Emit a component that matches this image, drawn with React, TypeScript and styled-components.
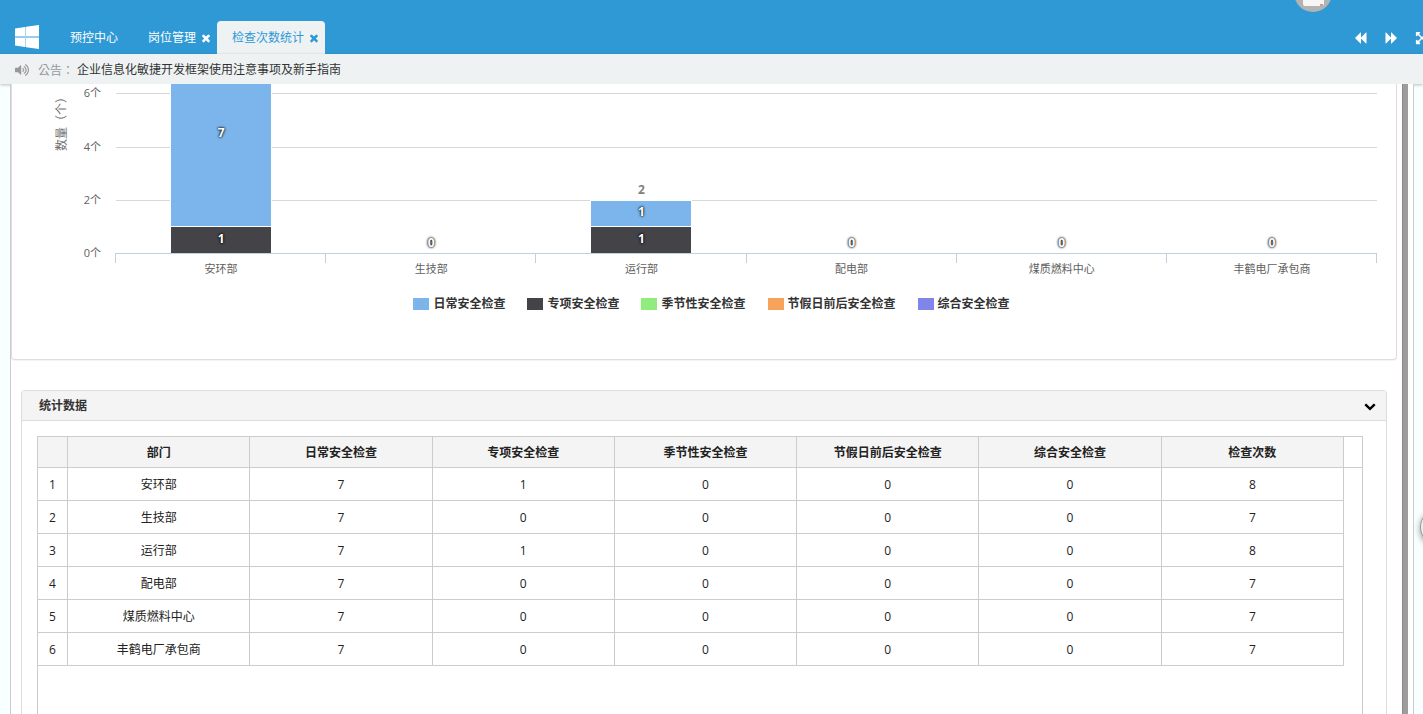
import React from "react";
import styled, { createGlobalStyle, css } from "styled-components";
import { FaExpandArrowsAlt, FaVolumeUp } from "react-icons/fa";

const fontStack = `"Open Sans", "Noto Sans CJK SC", sans-serif`;

const GlobalStyle = createGlobalStyle`
  * { box-sizing: border-box; }
  html, body, #root { height: 100%; }
  body {
    margin: 0;
    overflow: hidden;
    background: #f7ffff;
    color: #222;
    font: 12px/18px ${fontStack};
  }
  button { font: inherit; color: inherit; background: none; border: 0; padding: 0; cursor: pointer; }
`;

const Page = styled.div`
  position: relative;
  display: flex;
  flex-direction: column;
  height: 100%;
  overflow: hidden;
`;

const Header = styled.header`
  position: relative;
  flex: none;
  display: flex;
  align-items: flex-end;
  justify-content: space-between;
  height: 54px;
  background: #2f99d6;
  color: #fff;
`;

const Avatar = styled.svg`
  position: absolute;
  top: -26px;
  right: 91px;
`;

const Nav = styled.nav`
  display: flex;
  align-items: flex-end;
  padding-left: 15px;
`;

const Logo = styled.svg`
  display: block;
  margin: 0 16px 5px 0;
`;

const Tab = styled.div<{ $active?: boolean; $closable?: boolean }>`
  display: flex;
  align-items: center;
  gap: 4px;
  height: 33px;
  padding: 0 ${(p) => (p.$closable ? 5 : 15)}px 0 15px;
  ${(p) =>
    p.$active &&
    css`
      background: #eef2f3;
      color: #2f99d6;
      border-radius: 4px 4px 0 0;
    `}
`;

const TabLink = styled.a`
  color: inherit;
  text-decoration: none;
`;

const IconButton = styled.button`
  display: block;
  line-height: 0;
`;

const Tools = styled.div`
  flex: none;
  display: flex;
  align-items: center;
  gap: 18px;
  height: 33px;
  margin-right: -6px;
`;

const Notice = styled.div`
  position: relative;
  flex: none;
  display: flex;
  align-items: center;
  height: 30px;
  padding: 2px 0 0 15px;
  background: #eef2f3;
  color: #999;
  box-shadow: 0 1px 3px rgba(0, 0, 0, 0.25);
`;

const NoticeLabel = styled.span`
  margin-left: 9px;
  width: 39px;
  white-space: nowrap;
  font-family: "Noto Sans CJK TC", sans-serif;
`;

const NoticeLink = styled.a`
  color: #333;
  text-decoration: none;
`;

const Frame = styled.main`
  position: relative;
  flex: 1;
  min-height: 0;
  display: flex;
  margin: 0 9px 0 10px;
  border: solid #ccc;
  border-width: 0 1px;
  background: #fff;
  overflow: hidden;
`;

const Content = styled.div`
  flex: 1;
  min-width: 0;
  display: flex;
  flex-direction: column;
`;

const ScrollThumb = styled.div`
  flex: none;
  width: 6px;
  margin: 0 5px;
  background: #9e9d9c;
  border-left: 1px solid #8c8b8b;
`;

const ChartPanel = styled.section`
  flex: none;
  height: 276px;
  border: 1px solid #ddd;
  border-top: 0;
  border-radius: 0 0 4px 4px;
  box-shadow: 0 1px 1px rgba(0, 0, 0, 0.05);
`;

const ChartRow = styled.div`
  display: flex;
  padding-right: 19px;
`;

const AxisSvg = styled.svg`
  flex: none;
  display: block;
  font: 11px ${fontStack};
  fill: #606060;
`;

const AxisTitle = styled.text`
  font: 12px "Noto Sans CJK TC", sans-serif;
  text-spacing-trim: space-all;
  fill: #707070;
`;

const PlotSvg = styled.svg`
  flex: 1;
  min-width: 0;
  display: block;
  overflow: visible;
  font: 11px ${fontStack};
  fill: #606060;
`;

const BarValue = styled.text`
  font-size: 12px;
  font-weight: 700;
  fill: #fff;
  text-shadow: 0 0 3px #000, 0 0 2px #000;
`;

const StackTotal = styled.text`
  font-size: 12px;
  font-weight: 700;
  fill: #808080;
`;

const Legend = styled.ul`
  display: flex;
  justify-content: center;
  gap: 22px;
  margin: 0;
  padding: 7px 0 0 15px;
  list-style: none;
  font-weight: 600;
  color: #333;
`;

const LegendItem = styled.li`
  display: flex;
  align-items: center;
  gap: 4px;
`;

const Swatch = styled.span<{ $color: string }>`
  width: 16px;
  height: 12px;
  background: ${(p) => p.$color};
`;

const DataPanel = styled.section`
  flex: 1;
  display: flex;
  flex-direction: column;
  margin: 30px 10px 0;
  border: 1px solid #ddd;
  border-bottom: 0;
  border-radius: 4px 4px 0 0;
`;

const PanelHeader = styled.div`
  display: flex;
  align-items: center;
  justify-content: space-between;
  height: 30px;
  padding: 0 10px 0 17px;
  background: #f4f4f4;
  border-bottom: 1px solid #ddd;
`;

const PanelTitle = styled.h2`
  margin: 0;
  font-size: 12px;
  line-height: 18px;
  font-weight: 600;
  color: #333;
`;

const Grid = styled.div`
  flex: 1;
  display: flex;
  align-items: flex-start;
  margin: 15px 23px 0 15px;
  border: 1px solid #ccc;
  border-bottom: 0;
`;

const GridGutter = styled.div`
  flex: none;
  width: 18px;
  height: 31px;
  border-bottom: 1px solid #ccc;
`;

const TableArea = styled.div`
  flex: 1;
  min-width: 0;
`;

const Table = styled.table`
  width: 100%;
  table-layout: fixed;
  border-collapse: separate;
  border-spacing: 0;
`;

const NumberCol = styled.col`
  width: 30px;
`;

const HeadCell = styled.th`
  height: 31px;
  padding: 2px 0 0;
  border: solid #ccc;
  border-width: 0 1px 1px 0;
  background: #f4f4f4;
  font-weight: 600;
  color: #222;
`;

const Cell = styled.td`
  height: 33px;
  padding: 2px 0 0;
  border: solid #ccc;
  border-width: 0 1px 1px 0;
  text-align: center;
`;

const FloatingKnob = styled.button`
  position: absolute;
  right: -33px;
  top: 509px;
  width: 36px;
  height: 36px;
  border: 1px solid #999;
  border-radius: 50%;
  background: #eee;
  box-shadow: 0 2px 6px rgba(0, 0, 0, 0.4);
`;

const CloseIcon = () => (
  <svg width="12" height="12" viewBox="0 0 1792 1792" fill="currentColor" aria-hidden="true">
    <path d="M1490 1322q0 40-28 68l-136 136q-28 28-68 28t-68-28l-294-294-294 294q-28 28-68 28t-68-28l-136-136q-28-28-28-68t28-68l294-294-294-294q-28-28-28-68t28-68l136-136q28-28 68-28t68 28l294 294 294-294q28-28 68-28t68 28l136 136q28 28 28 68t-28 68l-294 294 294 294q28 28 28 68z" />
  </svg>
);

const ChevronIcon = () => (
  <svg width="12" height="12" viewBox="0 0 1792 1792" fill="#000" aria-hidden="true">
    <path d="M1683 808l-742 741q-19 19-45 19t-45-19l-742-741q-19-19-19-45.500t19-45.500l166-165q19-19 45-19t45 19l531 531 531-531q19-19 45-19t45 19l166 165q19 19 19 45.500t-19 45.500z" />
  </svg>
);

const BackwardIcon = () => (
  <svg width="12" height="12" viewBox="0 0 12 12" fill="#fff" aria-hidden="true">
    <path d="M0 6L5.500 .5H6V5.500L11 .5h.5v11H11L6 6.500v5h-.5z" />
  </svg>
);

const ForwardIcon = () => (
  <svg width="12" height="12" viewBox="0 0 12 12" fill="#fff" aria-hidden="true">
    <path d="M12 6L6.500 .5H6V5.500L1 .5H.5v11H1L6 6.500v5h.5z" />
  </svg>
);

const WindowsLogo = () => (
  <Logo width="24" height="24" viewBox="0 0 24 24" aria-hidden="true">
    <path fill="#fff" d="M0 3.500L10 2v9.200H0zM11 1.800L24 0v11.200H11zM0 12.800h10V22L0 20.500zM11 12.800h13V24l-13-1.800z" />
    <path fill="#a9d5ef" d="M0 11.200h24v1.600H0zM10 2h1v20h-1z" />
  </Logo>
);

type Tone = "blue" | "dark";
interface Department {
  name: string;
  counts: number[];
  total: number;
  stack: { tone: Tone; value: number; height: number }[];
}

const departments: Department[] = [
  { name: "安环部", counts: [7, 1, 0, 0, 0], total: 8, stack: [{ tone: "dark", value: 1, height: 27 }, { tone: "blue", value: 7, height: 187 }] },
  { name: "生技部", counts: [7, 0, 0, 0, 0], total: 7, stack: [] },
  { name: "运行部", counts: [7, 1, 0, 0, 0], total: 8, stack: [{ tone: "dark", value: 1, height: 27 }, { tone: "blue", value: 1, height: 26 }] },
  { name: "配电部", counts: [7, 0, 0, 0, 0], total: 7, stack: [] },
  { name: "煤质燃料中心", counts: [7, 0, 0, 0, 0], total: 7, stack: [] },
  { name: "丰鹤电厂承包商", counts: [7, 0, 0, 0, 0], total: 7, stack: [] },
];

const series = [
  { name: "日常安全检查", color: "#7cb5ec" },
  { name: "专项安全检查", color: "#434348" },
  { name: "季节性安全检查", color: "#90ed7d" },
  { name: "节假日前后安全检查", color: "#f7a35c" },
  { name: "综合安全检查", color: "#8085e9" },
];

const tones: Record<Tone, string> = { blue: "#7cb5ec", dark: "#434348" };
const gridLines = [
  { label: "6个", y: 9 },
  { label: "4个", y: 63 },
  { label: "2个", y: 116 },
  { label: "0个", y: 169 },
];
const baseline = 169;

const Column = ({ dept, index }: { dept: Department; index: number }) => {
  let top = baseline;
  const bars = dept.stack.map((s) => {
    top -= s.height;
    const y = Math.max(top, 0);
    const labelY = s.value === 7 ? 53 : top + (s.tone === "dark" ? 17 : 16);
    return { ...s, y, h: top + s.height - y, labelY };
  });
  return (
    <svg x={`${((index + 0.5) / departments.length) * 100}%`} overflow="visible">
      {bars.map((b) => (
        <g key={b.tone} shapeRendering="crispEdges">
          <rect x="-51" y={b.y} width="102" height={b.h} fill="#fff" />
          <rect x="-50" y={b.y === 0 ? 0 : b.y + 1} width="100" height={b.y === 0 ? b.h : b.h - 1} fill={tones[b.tone]} />
          <BarValue y={b.labelY} textAnchor="middle">{b.value}</BarValue>
        </g>
      ))}
      {dept.stack.length === 0 && <BarValue y={163} textAnchor="middle">0</BarValue>}
      {index === 2 && <StackTotal y={110} textAnchor="middle">2</StackTotal>}
      <text y={189} textAnchor="middle">{dept.name}</text>
    </svg>
  );
};

const Chart = () => (
  <ChartPanel>
    <ChartRow>
      <AxisSvg width="104" height="204">
        <AxisTitle transform="translate(54 67) rotate(-90)" lang="zh-TW">数量（个）</AxisTitle>
        {gridLines.map((g) => (
          <text key={g.label} x="89" y={g.y + 4} textAnchor="end">{g.label}</text>
        ))}
      </AxisSvg>
      <PlotSvg height="204">
        {gridLines.slice(0, 3).map((g) => (
          <rect key={g.y} x="0" y={g.y} width="100%" height="1" fill="#d8d8d8" />
        ))}
        {departments.map((d, i) => (
          <Column key={d.name} dept={d} index={i} />
        ))}
        <rect x="-1" y={baseline} width="100%" height="1" fill="#c0d0e0" />
        {[0, 1, 2, 3, 4, 5, 6].map((i) => (
          <svg key={i} x={`${(i / 6) * 100}%`} overflow="visible">
            <rect x="-1" y={baseline} width="1" height="10" fill="#c0d0e0" shapeRendering="crispEdges" />
          </svg>
        ))}
      </PlotSvg>
    </ChartRow>
    <Legend>
      {series.map((s) => (
        <LegendItem key={s.name}>
          <Swatch $color={s.color} />
          {s.name}
        </LegendItem>
      ))}
    </Legend>
  </ChartPanel>
);

const StatTable = () => (
  <Grid>
    <TableArea>
      <Table>
        <colgroup>
          <NumberCol />
          <col />
          {series.map((s) => <col key={s.name} />)}
          <col />
        </colgroup>
        <thead>
          <tr>
            <HeadCell />
            <HeadCell scope="col">部门</HeadCell>
            {series.map((s) => <HeadCell key={s.name} scope="col">{s.name}</HeadCell>)}
            <HeadCell scope="col">检查次数</HeadCell>
          </tr>
        </thead>
        <tbody>
          {departments.map((d, i) => (
            <tr key={d.name}>
              <Cell>{i + 1}</Cell>
              <Cell>{d.name}</Cell>
              {d.counts.map((c, k) => <Cell key={k}>{c}</Cell>)}
              <Cell>{d.total}</Cell>
            </tr>
          ))}
        </tbody>
      </Table>
    </TableArea>
    <GridGutter />
  </Grid>
);

export default function App() {
  return (
    <Page lang="zh-CN">
      <GlobalStyle />
      <Header>
        <Nav>
          <WindowsLogo />
          <Tab><TabLink href="#center">预控中心</TabLink></Tab>
          <Tab $closable>
            <TabLink href="#posts">岗位管理</TabLink>
            <IconButton aria-label="关闭岗位管理"><CloseIcon /></IconButton>
          </Tab>
          <Tab $closable $active>
            <TabLink href="#checks">检查次数统计</TabLink>
            <IconButton aria-label="关闭检查次数统计"><CloseIcon /></IconButton>
          </Tab>
        </Nav>
        <Avatar width="38" height="38" viewBox="0 0 38 38" aria-hidden="true">
          <circle cx="19" cy="19" r="19" fill="#b3b3b3" />
          <path d="M9 20h21v10q0 2-2 2H11q-2 0-2-2z" fill="#f6f6f6" />
          <path d="M26 30h3v2h-3z" fill="#c99" />
        </Avatar>
        <Tools>
          <IconButton aria-label="向左"><BackwardIcon /></IconButton>
          <IconButton aria-label="向右"><ForwardIcon /></IconButton>
          <IconButton aria-label="全屏"><FaExpandArrowsAlt size={14} /></IconButton>
        </Tools>
      </Header>
      <Notice>
        <FaVolumeUp size={14} />
        <NoticeLabel lang="zh-TW">公告：</NoticeLabel>
        <NoticeLink href="#notice">企业信息化敏捷开发框架使用注意事项及新手指南</NoticeLink>
      </Notice>
      <Frame>
        <Content>
          <Chart />
          <DataPanel>
            <PanelHeader>
              <PanelTitle>统计数据</PanelTitle>
              <IconButton aria-label="折叠"><ChevronIcon /></IconButton>
            </PanelHeader>
            <StatTable />
          </DataPanel>
        </Content>
        <ScrollThumb />
      </Frame>
      <FloatingKnob aria-label="助手" />
    </Page>
  );
}
